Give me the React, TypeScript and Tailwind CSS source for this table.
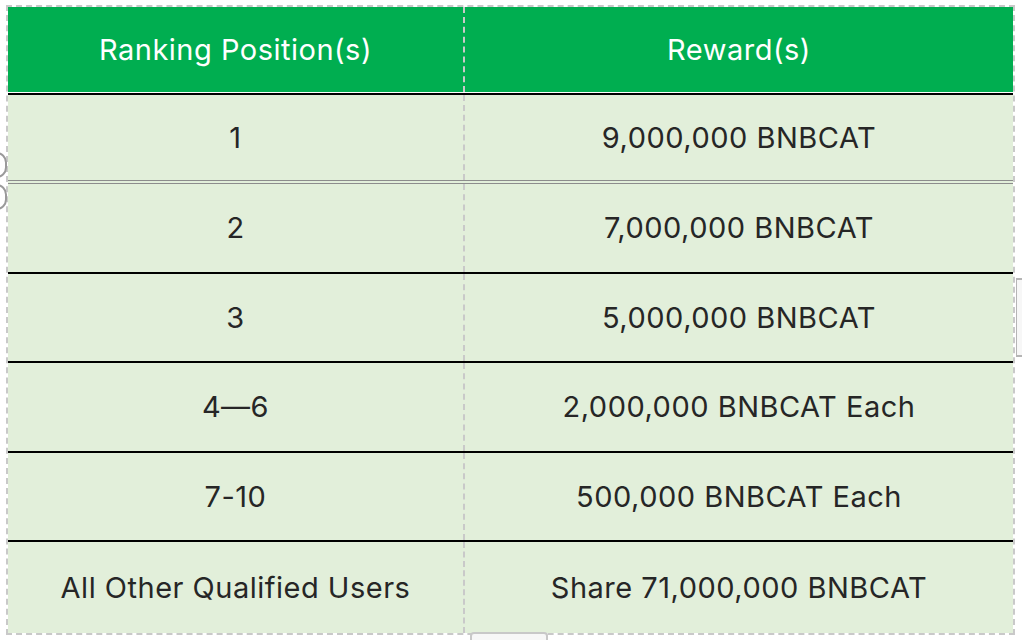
import React from 'react';

const rows: { rank: string; reward: string; h: string; sep: string }[] = [
  { rank: '1', reward: '9,000,000 BNBCAT', h: 'h-[87px]', sep: 'border-t-2 border-black' },
  { rank: '2', reward: '7,000,000 BNBCAT', h: 'h-[92px]', sep: 'border-t-[4px] border-double border-[#8c8c8c]' },
  { rank: '3', reward: '5,000,000 BNBCAT', h: 'h-[89px]', sep: 'border-t-2 border-black' },
  { rank: '4\u20146', reward: '2,000,000 BNBCAT Each', h: 'h-[90px]', sep: 'border-t-2 border-black' },
  { rank: '7-10', reward: '500,000 BNBCAT Each', h: 'h-[89px]', sep: 'border-t-2 border-black' },
  { rank: 'All Other Qualified Users', reward: 'Share 71,000,000 BNBCAT', h: 'h-[93px]', sep: 'border-t-2 border-black' },
];

const App: React.FC = () => {
  return (
    <div
      className="relative w-[1022px] h-[640px] bg-white overflow-hidden pt-[5px] pl-[6px]"
      style={{ fontFamily: 'Inter, "Noto Sans", sans-serif' }}
    >
      {/* bits of neighbouring ui peeking in at the edges */}
      <div className="absolute -left-[14px] top-[152px] w-[21px] h-[26px] rounded-full border-2 border-[#9a9a9a] bg-white" />
      <div className="absolute -left-[14px] top-[184px] w-[21px] h-[26px] rounded-full border-2 border-[#9a9a9a] bg-white" />
      <div className="absolute left-[1016px] top-[278px] w-[20px] h-[79px] border-t-2 border-b-2 border-l border-[#b5b5b5] bg-[#f7f7f7]" />
      <div className="absolute left-[470px] top-[632px] w-[78px] h-[20px] border-2 border-[#c8c8c8] rounded-sm bg-[#f7f7f7]" />

      <div className="w-[1009px] border-2 border-dashed border-[#c9c9c9] text-[29px] tracking-[0.5px]">
        <div className="grid grid-cols-[457px_1fr] bg-[#00ae50] h-[86px] border-b border-white text-white">
          <div className="flex items-center justify-center border-r-2 border-dashed border-[#c9c9c9]">
            Ranking Position(s)
          </div>
          <div className="flex items-center justify-center">Reward(s)</div>
        </div>
        {rows.map((r) => (
          <div key={r.rank} className={`grid grid-cols-[457px_1fr] bg-[#e2efda] text-[#262626] ${r.h} ${r.sep}`}>
            <div className="flex items-center justify-center border-r-2 border-dashed border-[#c9c9c9]">{r.rank}</div>
            <div className="flex items-center justify-center">{r.reward}</div>
          </div>
        ))}
      </div>
    </div>
  );
};

export default App;
